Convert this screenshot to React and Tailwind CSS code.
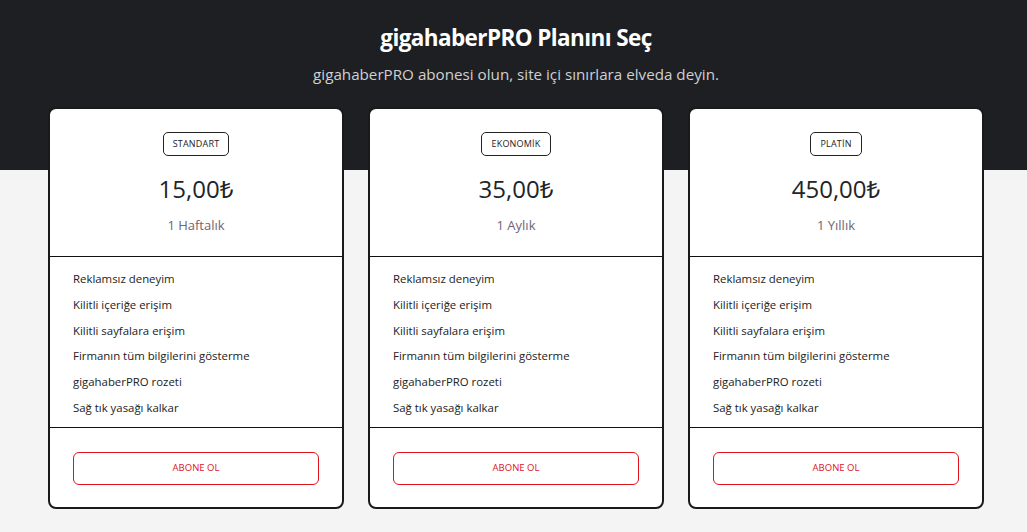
import React from 'react';

const plans = [
  { name: 'STANDART', price: '15,00₺', period: '1 Haftalık' },
  { name: 'EKONOMİK', price: '35,00₺', period: '1 Aylık' },
  { name: 'PLATİN', price: '450,00₺', period: '1 Yıllık' },
];

const features = [
  'Reklamsız deneyim',
  'Kilitli içeriğe erişim',
  'Kilitli sayfalara erişim',
  'Firmanın tüm bilgilerini gösterme',
  'gigahaberPRO rozeti',
  'Sağ tık yasağı kalkar',
];

const PlanCard = ({ plan }) => (
  <div className="w-[296px] h-[402px] bg-white border-2 border-[#1a1a1a] rounded-[8px] flex flex-col overflow-hidden">
    {/* Head */}
    <div className="h-[148px] flex flex-col items-center pt-[23px] border-b border-[#111]">
      <span className="h-[24px] px-[9px] flex items-center border border-[#222] rounded-[5px] text-[9px] text-[#222] tracking-[0.2px]">
        {plan.name}
      </span>
      <div className="mt-[17px] text-[24px] leading-[32px] text-[#212529]">{plan.price}</div>
      <div className="mt-[11px] text-[13px] leading-[18px] text-[#6d6577]">{plan.period}</div>
    </div>

    {/* Features */}
    <ul className="h-[171px] pt-[9px] px-[23px] border-b border-[#111]">
      {features.map((f) => (
        <li key={f} className="h-[25.7px] flex items-center text-[11.4px] text-[#222]">
          {f}
        </li>
      ))}
    </ul>

    {/* Action */}
    <div className="flex-1 px-[23px] pt-[24px]">
      <button className="w-full h-[33px] border border-[#e0121c] rounded-[6px] text-[9.5px] text-[#e0121c] bg-white">
        ABONE OL
      </button>
    </div>
  </div>
);

const App = () => {
  return (
    <div
      className="min-h-[532px] bg-[#f4f4f4] relative"
      style={{ fontFamily: '"Open Sans", "Noto Sans", sans-serif' }}
    >
      <div className="h-[170px] bg-[#1d1f23]"></div>
      <div className="absolute inset-x-0 top-0">
        <div className="pl-[5px] text-center pt-[20px]">
          <h1 className="text-[22.5px] leading-[36px] font-bold text-white tracking-[-0.6px]">gigahaberPRO Planını Seç</h1>
          <p className="mt-[6px] text-[15.2px] leading-[24px] text-[#d0d0d0]">
            gigahaberPRO abonesi olun, site içi sınırlara elveda deyin.
          </p>
        </div>
        <div className="ml-[48px] mt-[21px] flex gap-[24px]">
          {plans.map((p) => (
            <PlanCard key={p.name} plan={p} />
          ))}
        </div>
      </div>
    </div>
  );
};

export default App;
